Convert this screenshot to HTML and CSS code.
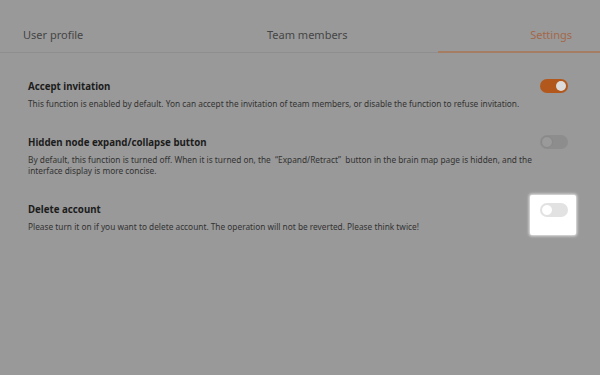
FILE: index.html
```html
<!DOCTYPE html>
<html lang="en">
<head>
<meta charset="utf-8">
<title>Settings</title>
<link rel="stylesheet" href="styles.css">
</head>
<body>
<div class="page">
  <nav class="tabs">
    <div class="tab tab-profile">User profile</div>
    <div class="tab tab-team">Team members</div>
    <div class="tab tab-settings active">Settings</div>
  </nav>
  <main class="settings">
    <section class="row">
      <div class="row-head">
        <h3 class="title">Accept invitation</h3>
        <span class="switch on"><span class="knob"></span></span>
      </div>
      <p class="desc">This function is enabled by default. Yon can accept the invitation of team members, or disable the function to refuse invitation.</p>
    </section>
    <section class="row">
      <div class="row-head">
        <h3 class="title">Hidden node expand/collapse button</h3>
        <span class="switch off"><span class="knob"></span></span>
      </div>
      <p class="desc">By default, this function is turned off. When it is turned on, the &nbsp;“Expand/Retract” &nbsp;button in the brain map page is hidden, and the interface display is more concise.</p>
    </section>
    <section class="row">
      <div class="row-head">
        <h3 class="title">Delete account</h3>
        <span class="spot"><span class="switch lit"><span class="knob"></span></span></span>
      </div>
      <p class="desc">Please turn it on if you want to delete account. The operation will not be reverted. Please think twice!</p>
    </section>
  </main>
</div>
</body>
</html>
```
FILE: styles.css
```css
* { box-sizing: border-box; }
html, body { margin: 0; padding: 0; }
body {
  width: 600px;
  height: 375px;
  background: #999999;
  font-family: "Noto Sans", "Open Sans", sans-serif;
  overflow: hidden;
}
.tabs {
  display: flex;
  height: 53px;
  border-bottom: 1px solid #8e8e8e;
}
.tab {
  font-size: 11px;
  color: #454545;
  padding-top: 27px;
  line-height: 16px;
}
.tab-profile { width: 267px; padding-left: 23px; }
.tab-team { width: 171px; }
.tab-settings {
  width: 162px;
  text-align: right;
  padding-right: 28px;
  color: #a3684a;
  border-bottom: 2px solid #a57d63;
  margin-bottom: -1px;
}
.settings {
  padding: 25px 32px 0 28px;
  display: flex;
  flex-direction: column;
  gap: 25px;
}
.row-head {
  display: flex;
  align-items: center;
  justify-content: space-between;
  height: 16px;
}
.title {
  margin: 0;
  font-size: 9.7px;
  font-weight: 700;
  color: #1c1c1c;
}
.desc {
  margin: 4px 0 0;
  max-width: 512px;
  font-size: 8.3px;
  line-height: 11px;
  color: #333333;
}
.switch {
  position: relative;
  display: block;
  width: 28px;
  height: 14px;
  border-radius: 7px;
}
.knob {
  position: absolute;
  top: 2px;
  width: 10px;
  height: 10px;
  border-radius: 50%;
}
.switch.on { background: #b3581d; }
.switch.on .knob { right: 2px; background: #dcdcdc; }
.switch.off { background: #8d8d8d; }
.switch.off .knob { left: 1px; top: 1px; width: 12px; height: 12px; background: #9a9a9a; border: 1px solid #888; }
.spot {
  display: block;
  background: #ffffff;
  padding: 8px 8px 18px 10px;
  margin: 0 -8px 0 0;
  border-radius: 2px;
  box-shadow: 0 0 3px 1px rgba(255,255,255,0.8);
  position: relative;
  top: 6px;
}
.switch.lit { background: #e2e2e2; }
.switch.lit .knob { left: 1px; top: 1px; width: 12px; height: 12px; background: #fff; border: 1px solid #e0e0e0; }
```
